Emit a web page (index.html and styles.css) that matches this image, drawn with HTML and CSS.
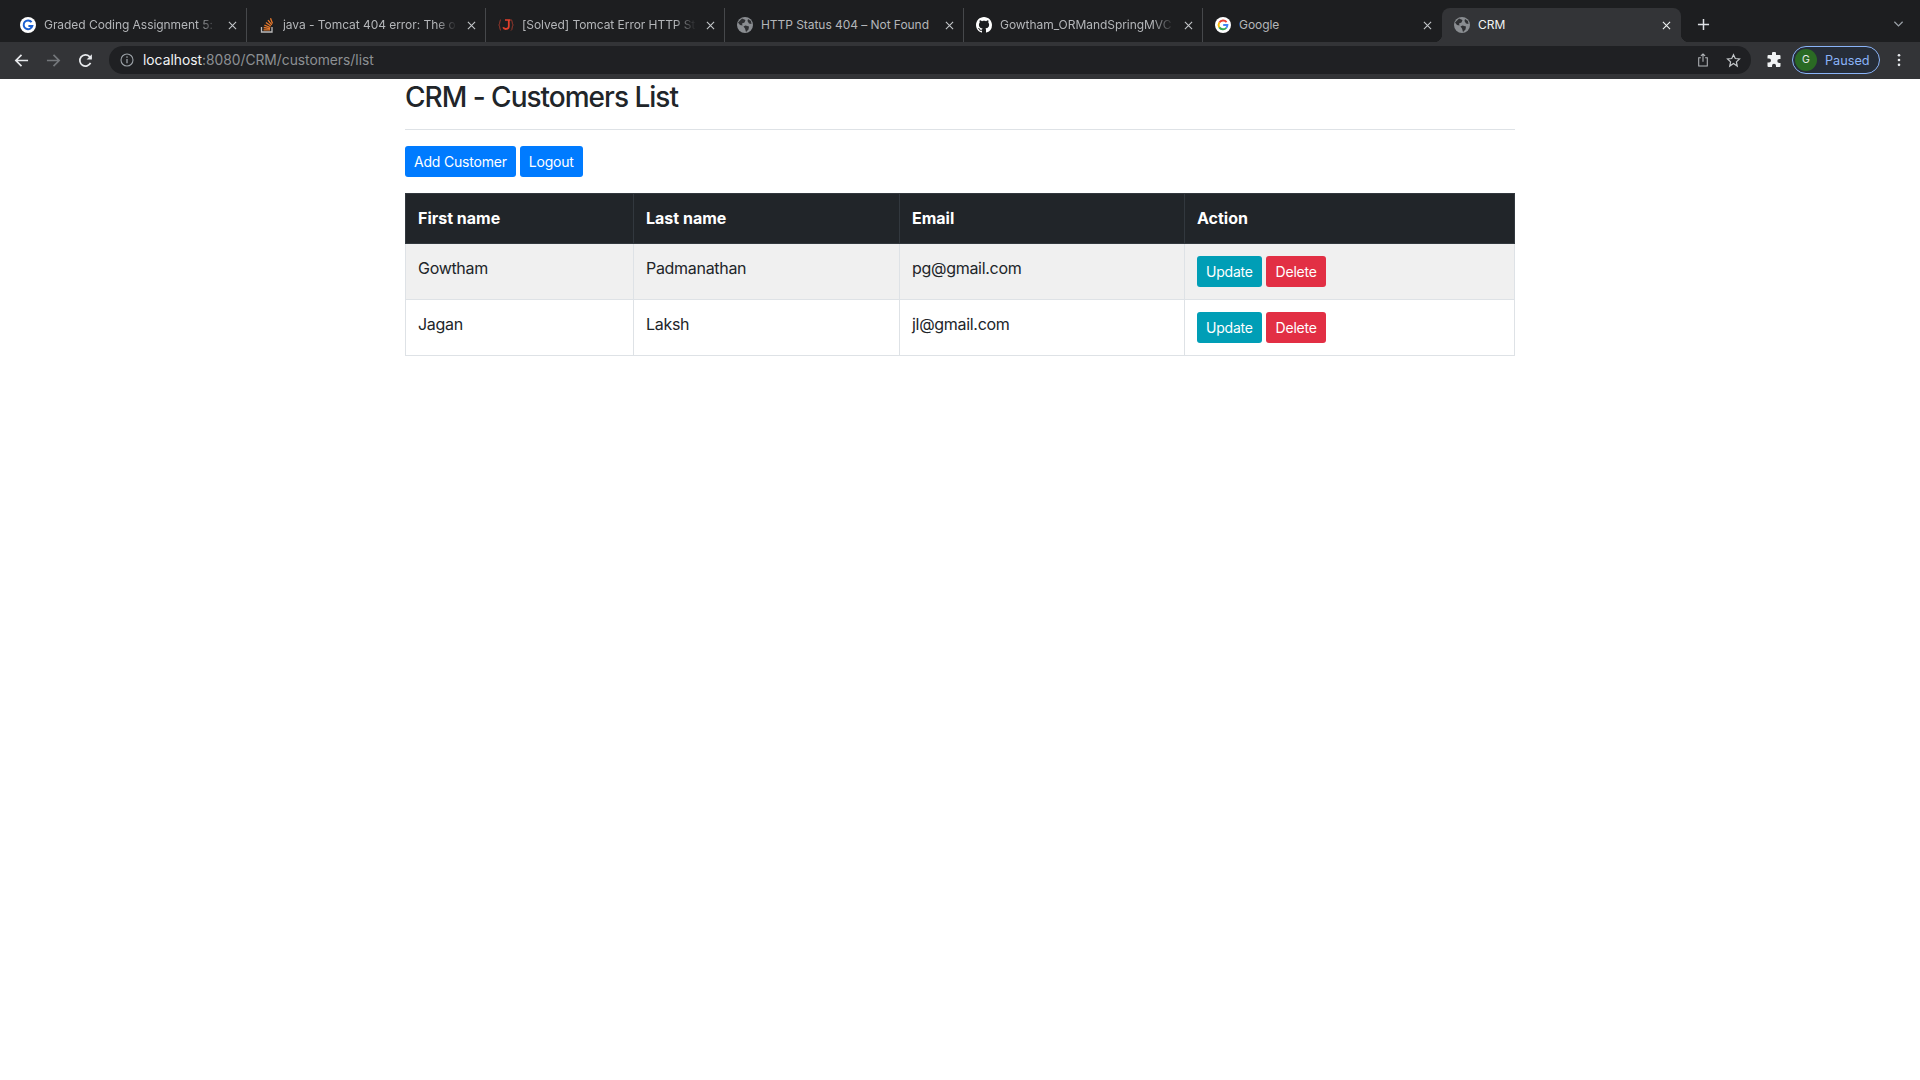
FILE: index.html
```html
<!DOCTYPE html>
<html lang="en">
<head>
    <meta charset="UTF-8">
    <title>CRM</title>
    <link rel="stylesheet" href="styles.css">
</head>
<body>
    <!-- Browser chrome -->
    <header class="browser">
        <div class="tabstrip">
            <div class="tab">
                <svg class="favicon" viewBox="0 0 16 16"><circle cx="8" cy="8" r="8" fill="#fff"/><path d="M11.600 5.200A4.400 4.400 0 1 0 12.300 9H8.400" fill="none" stroke="#1a5fd0" stroke-width="2"/></svg>
                <span class="tab-title">Graded Coding Assignment 5: </span>
                <svg class="tab-close" viewBox="0 0 10 10"><use href="#close"/></svg>
            </div>
            <div class="tab">
                <svg class="favicon" viewBox="0 0 16 16"><path d="M2.500 10v5h10.500v-5" fill="none" stroke="#bcbbbb" stroke-width="1.300"/><path d="M4.500 12.800h6.500M4.700 10.500l6.300 1.100M5.400 8.100l5.900 2.400M6.900 5.500l5 3.500M9 3.200l3.800 4.700M11.500 1.200l2 5.300" fill="none" stroke="#e8792b" stroke-width="1.300"/></svg>
                <span class="tab-title">java - Tomcat 404 error: The o</span>
                <svg class="tab-close" viewBox="0 0 10 10"><use href="#close"/></svg>
            </div>
            <div class="tab">
                <svg class="favicon" viewBox="0 0 16 16"><path d="M3 2.500C1.500 2.500 2.200 7.300.8 8c1.400.7.700 5.500 2.200 5.500M13 2.500c1.500 0 .8 4.800 2.200 5.500-1.400.7-.7 5.500-2.200 5.500" fill="none" stroke="#a33a2c" stroke-width=".9"/><path d="M10.800 3v6.500c0 3-4.800 3.300-5.600.8" fill="none" stroke="#e2402c" stroke-width="1.800"/><path d="M7 3h5.500" stroke="#e2402c" stroke-width="1.500"/></svg>
                <span class="tab-title">[Solved] Tomcat Error HTTP St</span>
                <svg class="tab-close" viewBox="0 0 10 10"><use href="#close"/></svg>
            </div>
            <div class="tab">
                <svg class="favicon" viewBox="0 0 16 16"><use href="#globe"/></svg>
                <span class="tab-title tab-title-plain">HTTP Status 404 – Not Found</span>
                <svg class="tab-close" viewBox="0 0 10 10"><use href="#close"/></svg>
            </div>
            <div class="tab">
                <svg class="favicon" viewBox="0 0 16 16"><path fill="#fff" d="M8 0C3.580 0 0 3.580 0 8c0 3.540 2.290 6.530 5.470 7.590.4.070.55-.17.55-.38 0-.19-.01-.82-.01-1.490-2.010.37-2.530-.49-2.690-.94-.09-.23-.48-.94-.82-1.130-.28-.15-.68-.52-.01-.53.63-.01 1.080.58 1.230.82.720 1.210 1.870.870 2.330.660.070-.520.280-.870.510-1.070-1.780-.2-3.640-.890-3.640-3.950 0-.870.310-1.590.820-2.150-.080-.2-.360-1.020.080-2.120 0 0 .670-.210 2.200.820.640-.180 1.320-.270 2-.270s1.360.090 2 .270c1.530-1.040 2.200-.820 2.200-.820.440 1.100.160 1.920.080 2.120.510.560.820 1.270.820 2.150 0 3.070-1.870 3.750-3.650 3.950.290.250.540.730.540 1.480 0 1.070-.010 1.930-.010 2.200 0 .210.150.460.550.380A8.010 8.010 0 0 0 16 8c0-4.420-3.580-8-8-8z"/></svg>
                <span class="tab-title">Gowtham_ORMandSpringMVC</span>
                <svg class="tab-close" viewBox="0 0 10 10"><use href="#close"/></svg>
            </div>
            <div class="tab tab-last">
                <svg class="favicon" viewBox="0 0 16 16"><circle cx="8" cy="8" r="8" fill="#fff"/><path d="M11.600 5.100A4.500 4.500 0 0 0 4.300 5.600" fill="none" stroke="#ea4335" stroke-width="1.900"/><path d="M4.300 5.600a4.500 4.500 0 0 0 0 4.800" fill="none" stroke="#fbbc05" stroke-width="1.900"/><path d="M4.300 10.400a4.500 4.500 0 0 0 7 .4" fill="none" stroke="#34a853" stroke-width="1.900"/><path d="M11.300 10.800A4.500 4.500 0 0 0 12.400 8H8.200" fill="none" stroke="#4285f4" stroke-width="1.900"/></svg>
                <span class="tab-title tab-title-plain">Google</span>
                <svg class="tab-close" viewBox="0 0 10 10"><use href="#close"/></svg>
            </div>
            <div class="tab tab-active">
                <svg class="favicon" viewBox="0 0 16 16"><use href="#globe"/></svg>
                <span class="tab-title tab-title-plain">CRM</span>
                <svg class="tab-close" viewBox="0 0 10 10"><use href="#close"/></svg>
            </div>
            <svg class="new-tab" viewBox="0 0 14 14"><path d="M7 1v12M1 7h12" stroke="#dfe1e5" stroke-width="1.600" fill="none"/></svg>
            <svg class="tab-search" viewBox="0 0 12 8"><path d="M1.500 1.500 6 6l4.500-4.500" stroke="#9aa0a6" stroke-width="1.400" fill="none"/></svg>
        </div>

        <div class="toolbar">
            <svg class="nav-icon" viewBox="0 0 16 16"><path d="M15 8H2M8 2 2 8l6 6" fill="none" stroke="#e8eaed" stroke-width="1.800"/></svg>
            <svg class="nav-icon" viewBox="0 0 16 16"><path d="M1 8h13M8 2l6 6-6 6" fill="none" stroke="#74777b" stroke-width="1.800"/></svg>
            <svg class="nav-icon" viewBox="0 0 16 16"><path d="M13.400 10.500A6 6 0 1 1 12.300 3.800L14 5.500" fill="none" stroke="#e8eaed" stroke-width="1.800"/><path d="M14.800 1.200v5.600H9.200z" fill="#e8eaed"/></svg>
            <div class="omnibox">
                <svg class="info-icon" viewBox="0 0 14 14"><circle cx="7" cy="7" r="6" fill="none" stroke="#9aa0a6" stroke-width="1.100"/><path d="M7 6v4.300" stroke="#9aa0a6" stroke-width="1.300"/><circle cx="7" cy="4.100" r=".8" fill="#9aa0a6"/></svg>
                <span class="url"><span class="url-host">localhost</span>:8080/CRM/customers/list</span>
                <svg class="omni-icon share" viewBox="0 0 14 16"><path d="M4.500 5.500H2v9.500h10V5.500H9.500M7 10V1M4.500 3.300 7 .9l2.500 2.400" fill="none" stroke="#b4b7bb" stroke-width="1.200"/></svg>
                <svg class="omni-icon" viewBox="0 0 16 16"><path d="m8 1.800 1.900 4.100 4.500.5-3.300 3.100.9 4.500L8 11.300l-4 2.700.9-4.500L1.600 6.400l4.500-.5z" fill="none" stroke="#c4c7ca" stroke-width="1.300"/></svg>
            </div>
            <svg class="ext-icon" viewBox="0 0 16 16"><path fill="#f1f3f4" d="M6 1.500a2 2 0 0 1 4 0V3h3.500a1 1 0 0 1 1 1v3h-1.200a2 2 0 0 0 0 4h1.200v3a1 1 0 0 1-1 1H10v-1.200a2 2 0 0 0-4 0V15H2.500a1 1 0 0 1-1-1v-3.500H3a2 2 0 0 0 0-4H1.500V4a1 1 0 0 1 1-1H6z"/></svg>
            <div class="profile">
                <span class="avatar">G</span>
                <span class="paused">Paused</span>
            </div>
            <svg class="menu-icon" viewBox="0 0 4 16"><circle cx="2" cy="2.500" r="1.500" fill="#e8eaed"/><circle cx="2" cy="8" r="1.500" fill="#e8eaed"/><circle cx="2" cy="13.500" r="1.500" fill="#e8eaed"/></svg>
        </div>
    </header>

    <!-- Shapes used by several tabs -->
    <svg class="defs">
        <symbol id="globe" viewBox="0 0 16 16">
            <circle cx="8" cy="8" r="8" fill="#8a8d91"/>
            <path d="M5 1.500 8.500 3 7.500 5.500 5 6.500 5.500 8.500 3 8 1 5.500ZM8.500 8.500l3.500 1-.5 3-2.500 2.500-1-3.500-1.500-2ZM11 2l3 2 .5 3-2.500-.5-1.500-2.500Z" fill="#2f3033"/>
        </symbol>
        <symbol id="close" viewBox="0 0 10 10">
            <path d="M1 1l8 8M9 1l-8 8" fill="none" stroke="currentColor" stroke-width="1.200"/>
        </symbol>
    </svg>

    <!-- Page -->
    <main class="container">
        <h3 class="page-title">CRM - Customers List</h3>
        <hr class="divider">

        <div class="actions">
            <a class="btn btn-primary">Add Customer</a>
            <a class="btn btn-primary">Logout</a>
        </div>

        <table class="customers">
            <thead>
                <tr>
                    <th class="col-first">First name</th>
                    <th class="col-last">Last name</th>
                    <th class="col-email">Email</th>
                    <th>Action</th>
                </tr>
            </thead>
            <tbody>
                <tr class="striped">
                    <td>Gowtham</td>
                    <td>Padmanathan</td>
                    <td>pg@gmail.com</td>
                    <td class="cell-actions">
                        <a class="btn btn-info">Update</a>
                        <a class="btn btn-danger">Delete</a>
                    </td>
                </tr>
                <tr>
                    <td>Jagan</td>
                    <td>Laksh</td>
                    <td>jl@gmail.com</td>
                    <td class="cell-actions">
                        <a class="btn btn-info">Update</a>
                        <a class="btn btn-danger">Delete</a>
                    </td>
                </tr>
            </tbody>
        </table>
    </main>
</body>
</html>
```

FILE: styles.css
```css
/* Page */
body {
    margin: 0;
    background-color: #ffffff;
    color: #212529;
    font-family: Inter, "Liberation Sans", sans-serif;
    font-size: 16px;
}

/* Browser chrome */
.browser {
    height: 79px;
    background-color: #1d1e20;
    overflow: hidden;
}
.tabstrip {
    display: flex;
    align-items: flex-end;
    height: 42px;
    padding-left: 8px;
}
.tab {
    display: flex;
    align-items: center;
    width: 239px;
    height: 34px;
    padding: 0 9px 0 12px;
    box-sizing: border-box;
    border-right: 1px solid #46484b;
    background-clip: padding-box;
    position: relative;
}
.tab-last {
    border-right: none;
    padding-right: 10px;
}
.tab-active {
    border-right: none;
    padding-right: 10px;
    border-radius: 8px 8px 0 0;
    background-color: #333437;
}
/* little curves at the foot of the active tab */
.tab-active::before,
.tab-active::after {
    content: "";
    position: absolute;
    bottom: 0;
    width: 8px;
    height: 8px;
}
.tab-active::before {
    left: -8px;
    background: radial-gradient(circle at 0 0, transparent 8px, #333437 8.5px);
}
.tab-active::after {
    right: -8px;
    background: radial-gradient(circle at 100% 0, transparent 8px, #333437 8.5px);
}
.favicon {
    width: 16px;
    height: 16px;
    flex: none;
    margin-right: 8px;
}
.tab-title {
    flex: 1;
    overflow: hidden;
    white-space: nowrap;
    margin-bottom: 1px;
    font-size: 12px;
    letter-spacing: -0.05px;
    color: #b4b6b9;
    -webkit-mask-image: linear-gradient(to right, #000 88%, transparent 100%);
    mask-image: linear-gradient(to right, #000 88%, transparent 100%);
}
.tab-title-plain {
    -webkit-mask-image: none;
    mask-image: none;
}
.tab-active .tab-title {
    color: #f1f3f4;
}
.tab-close {
    flex: none;
    width: 9px;
    height: 9px;
    margin-left: 10px;
    color: #c4c7ca;
}
.tab-active .tab-close {
    color: #f1f3f4;
}
.new-tab {
    width: 13px;
    height: 13px;
    margin: 0 0 11px 16px;
}
.tab-search {
    width: 11px;
    height: 8px;
    margin: 0 16px 14px auto;
}

.toolbar {
    display: flex;
    align-items: center;
    height: 37px;
    padding-bottom: 1px;
    box-sizing: border-box;
    background-color: #333437;
}
.nav-icon {
    width: 15px;
    height: 15px;
    margin-left: 14px;
    margin-right: 3px;
}
.omnibox {
    display: flex;
    align-items: center;
    flex: 1;
    height: 28px;
    margin-left: 13px;
    padding: 0 10px 0 11px;
    border-radius: 14px;
    background-color: #1f2023;
}
.info-icon {
    width: 14px;
    height: 14px;
    margin-right: 9px;
}
.url {
    flex: 1;
    font-size: 13.8px;
    color: #8d9094;
}
.url-host {
    color: #f1f3f4;
}
.omni-icon {
    width: 15px;
    height: 15px;
    margin-left: 17px;
}
.share {
    width: 12px;
    height: 14px;
}
.ext-icon {
    width: 16px;
    height: 16px;
    margin-left: 15px;
}
.profile {
    display: flex;
    align-items: center;
    width: 88px;
    height: 28px;
    margin-left: 10px;
    box-sizing: border-box;
    border: 1px solid #8ab4f8;
    border-radius: 14px;
    background-color: #262d38;
    padding-left: 2px;
}
.avatar {
    width: 22px;
    height: 22px;
    margin-right: 8px;
    border-radius: 50%;
    background-color: #2a6a24;
    color: #e8eaed;
    font-size: 10.5px;
    line-height: 22px;
    text-align: center;
}
.paused {
    font-size: 12.7px;
    color: #8ab4f8;
}
.menu-icon {
    width: 4px;
    height: 14px;
    margin: 0 19px 0 17px;
}
.defs {
    display: none;
}

/* Content */
.container {
    width: 1110px;
    margin: 0 auto;
}
.page-title {
    margin: 0;
    padding: 2px 0 6px;
    font-size: 28px;
    font-weight: 500;
    line-height: 33.6px;
    letter-spacing: -1px;
}
.divider {
    margin: 8px 0 16px;
    border: 0;
    border-top: 1px solid #dee2e6;
}
.actions {
    display: flex;
    gap: 4px;
    margin-bottom: 16px;
}
.btn {
    display: inline-block;
    padding: 0 9px;
    border-radius: 3px;
    color: #ffffff;
    font-size: 14px;
    line-height: 31px;
    letter-spacing: -0.2px;
}
.btn-primary {
    background-color: #007bff;
}
.btn-info {
    background-color: #009eb6;
}
.btn-danger {
    padding: 0 9.5px;
    background-color: #e22f44;
}

/* Customers table */
.customers {
    width: 1110px;
    table-layout: fixed;
    border-collapse: collapse;
}
.customers th,
.customers td {
    height: 56px;
    padding: 12px;
    box-sizing: border-box;
    border: 1px solid #dee2e6;
    text-align: left;
    vertical-align: top;
    line-height: 24px;
    letter-spacing: -0.3px;
}
.customers th {
    height: 50px;
    background-color: #212529;
    border-color: #32383e;
    color: #ffffff;
    font-weight: 700;
    letter-spacing: 0;
}
.col-first {
    width: 228px;
}
.col-last {
    width: 266px;
}
.col-email {
    width: 285px;
}
.striped {
    background-color: #f0f0f0;
}
.cell-actions {
    padding-bottom: 0;
    letter-spacing: 0;
}
```
